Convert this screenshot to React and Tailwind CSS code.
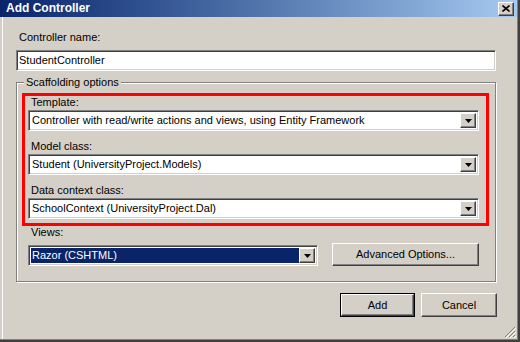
import React from "react";

const font = { fontFamily: '"Liberation Sans", Arial, sans-serif' };

const sunken =
  "border border-t-[#808080] border-l-[#808080] border-b-white border-r-white shadow-[inset_1px_1px_0_#404040,inset_-1px_-1px_0_#d4d0c8]";
const raised =
  "border border-t-white border-l-white border-b-[#404040] border-r-[#404040] shadow-[inset_-1px_-1px_0_#808080,inset_1px_1px_0_#d4d0c8]";

function Arrow() {
  return (
    <svg width="7" height="4" viewBox="0 0 7 4">
      <path d="M0 0h7L3.5 4z" fill="#000" />
    </svg>
  );
}

function Combo({ value, selected, className = "" }) {
  return (
    <div className={`flex h-[21px] ${sunken} p-[2px] bg-white ${className}`}>
      <div
        className={`flex-1 flex items-center pl-[1px] ${
          selected ? "bg-[#0a246a] text-white" : "text-black"
        }`}
      >
        {value}
      </div>
      <div className={`w-[16px] flex items-center justify-center bg-[#d4d0c8] ${raised}`}>
        <Arrow />
      </div>
    </div>
  );
}

function Button({ children, isDefault, className = "" }) {
  const inner = (
    <div className={`flex h-full items-center justify-center bg-[#d4d0c8] ${raised}`}>
      {children}
    </div>
  );
  if (isDefault) {
    return <div className={`border border-black ${className}`}>{inner}</div>;
  }
  return <div className={className}>{inner}</div>;
}

export default function App() {
  return (
    <div
      className="w-[520px] h-[342px] bg-[#d4d0c8] text-[11px] leading-[13px] text-black border-r-2 border-b-2 border-[#404040] overflow-hidden"
      style={font}
    >
      <div className="relative h-full flex flex-col border-r border-b border-[#808080]">
        {/* title bar */}
        <div className="h-[17px] shrink-0 flex items-center justify-between bg-linear-to-r from-[#0a246a] to-[#a6caf0] pl-[6px] pr-[3px]">
          <span className="font-bold text-white text-[12px]">Add Controller</span>
          <div className={`w-[16px] h-[14px] flex items-center justify-center bg-[#d4d0c8] ${raised}`}>
            <svg width="8" height="7" viewBox="0 0 8 7">
              <path d="M0.5 0.5L7.5 6.5M7.5 0.5L0.5 6.5" stroke="#000" strokeWidth="1.6" />
            </svg>
          </div>
        </div>

        {/* body */}
        <div className="flex-1 ml-[2px] border-l border-white pl-[13px]">
          <div className="mt-[14px] pl-[3px]">Controller name:</div>
          <div className={`mt-[6px] w-[480px] h-[21px] bg-white ${sunken} flex items-center pl-[2px]`}>
            StudentController
          </div>

          {/* group box */}
          <div className="relative mt-[11px] w-[480px] border border-[#808080] shadow-[inset_1px_1px_0_#fff,1px_1px_0_#fff] pl-[5px] pr-[6px] pt-[10px] pb-[15px]">
            <span className="absolute left-[7px] top-[-7px] bg-[#d4d0c8] px-[2px]">
              Scaffolding options
            </span>

            <div className="border-[3px] border-[#ff0000] pl-[3px] pr-[7px] pb-[4px]">
              <div className="pl-[3px]">Template:</div>
              <Combo
                className="mt-[1px]"
                value="Controller with read/write actions and views, using Entity Framework"
              />
              <div className="mt-[9px] pl-[3px]">Model class:</div>
              <Combo className="mt-[1px]" value="Student (UniversityProject.Models)" />
              <div className="mt-[9px] pl-[3px]">Data context class:</div>
              <Combo className="mt-[1px]" value="SchoolContext (UniversityProject.Dal)" />
            </div>

            <div className="pl-[9px]">Views:</div>
            <div className="mt-[4px] flex items-start pl-[6px]">
              <Combo className="mt-[2px] w-[290px] h-[20px]" value="Razor (CSHTML)" selected />
              <Button className="ml-[14px] w-[147px] h-[23px]">Advanced Options...</Button>
            </div>
          </div>

          {/* dialog buttons */}
          <div className="mt-[11px] w-[481px] flex justify-end gap-[6px]">
            <Button isDefault className="w-[75px] h-[24px]">
              Add
            </Button>
            <Button className="w-[76px] h-[24px]">Cancel</Button>
          </div>
        </div>

        {/* size grip */}
        <svg
          className="absolute right-[1px] bottom-[1px]"
          width="12"
          height="12"
          viewBox="0 0 12 12"
        >
          <path d="M11 1L1 11M11 5L5 11M11 9L9 11" stroke="#808080" strokeWidth="1" />
          <path d="M12 2L2 12M12 6L6 12M12 10L10 12" stroke="#fff" strokeWidth="1" />
        </svg>
      </div>
    </div>
  );
}
